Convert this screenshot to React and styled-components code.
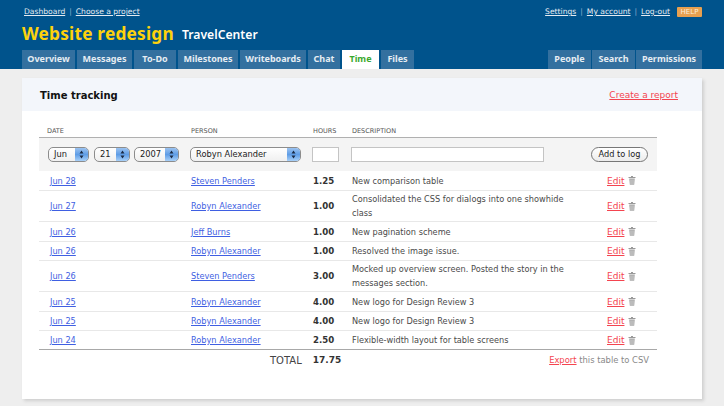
import React from 'react';
import styled, { createGlobalStyle } from 'styled-components';

const GlobalStyle = createGlobalStyle`
  html, body {
    margin: 0;
    padding: 0;
    background: #eeeeee;
    font-family: "DejaVu Sans", Verdana, sans-serif;
    overflow: hidden;
  }
`;

const Page = styled.div`
  width: 724px;
  height: 406px;
  overflow: hidden;
`;

const Header = styled.header`
  height: 69px;
  background: #00538c;
  padding: 0 22px;
  box-sizing: border-box;
  display: flex;
  flex-direction: column;
`;

const TopBar = styled.div`
  height: 23px;
  display: flex;
  justify-content: space-between;
  align-items: center;
  padding: 0 0 0 2px;
  font-size: 7.6px;
  color: #8fb0cc;
`;

const TopLinks = styled.div`
  display: flex;
  align-items: center;
  gap: 4px;
`;

const TopLink = styled.a`
  color: #e4ebf2;
  text-decoration: underline;
`;

const HelpBadge = styled.span`
  width: 25px;
  height: 10px;
  margin-left: 3px;
  background: #e8a050;
  color: #fbeedd;
  border-radius: 1px;
  font-size: 7px;
  line-height: 11px;
  text-align: center;
`;

const TitleRow = styled.div`
  height: 27px;
  box-sizing: border-box;
  padding-bottom: 6px;
  display: flex;
  align-items: center;
  gap: 8px;
`;

const ProjectName = styled.h1`
  margin: 0;
  color: #fdd20c;
  font-family: "Noto Sans", sans-serif;
  font-size: 17.3px;
  font-weight: bold;
  letter-spacing: 0.2px;
`;

const ClientName = styled.span`
  color: #ffffff;
  font-family: "Noto Sans", sans-serif;
  font-size: 12.2px;
  font-weight: 600;
  margin-top: 2px;
`;

const TabRow = styled.nav`
  height: 19px;
  display: flex;
  justify-content: space-between;
`;

const TabGroup = styled.div`
  display: flex;
  gap: ${p => p.$gap || 2}px;
`;

const Tab = styled.a`
  width: ${p => p.$w}px;
  background: ${p => (p.$active ? '#ffffff' : '#33709f')};
  color: ${p => (p.$active ? '#3aa82c' : '#e6edf3')};
  font-family: "Noto Sans", sans-serif;
  font-size: 9px;
  font-weight: 700;
  line-height: 18px;
  text-align: center;
`;

const Main = styled.main`
  padding: 9px 22px 0;
`;

const Panel = styled.section`
  width: 680px;
  height: 321px;
  background: #ffffff;
  box-shadow: 2px 2px 3px #cfcfcf;
`;

const PanelHead = styled.div`
  height: 33px;
  box-sizing: border-box;
  padding: 1px 24px 0 18px;
  background: #f3f6fb;
  display: flex;
  justify-content: space-between;
  align-items: center;
`;

const PanelTitle = styled.h2`
  margin: 0;
  font-size: 10px;
  font-weight: bold;
  color: #111111;
`;

const RedLink = styled.a`
  color: #f4444f;
  text-decoration: underline;
  font-size: ${p => p.$size || 9}px;
`;

const Sheet = styled.div`
  margin: 0 45px 0 17px;
  padding-top: 14px;
  color: #444444;
`;

const cols = '152px 122px 39px 1fr 50px';

const HeadRow = styled.div`
  display: grid;
  grid-template-columns: ${cols};
  height: 12px;
  border-bottom: 1px solid #b0b0b0;
  font-size: 6.5px;
  line-height: 12px;
  color: #555555;
`;

const HeadCell = styled.span`
  padding-left: ${p => p.$pad || 0}px;
`;

const FormRow = styled.div`
  height: 33px;
  background: #f4f4f4;
  display: flex;
  align-items: center;
  padding-left: 9px;
`;

const Select = styled.div`
  width: ${p => p.$w}px;
  height: 15px;
  margin-right: ${p => p.$mr}px;
  box-sizing: border-box;
  display: flex;
  justify-content: space-between;
  border: 1px solid #8c8c8c;
  border-radius: 5px;
  background: linear-gradient(#ffffff, #f0f0f0);
  overflow: hidden;
  font-size: 8.3px;
  line-height: 13px;
  color: #222222;
  padding-left: 5px;
`;

const SelectArrow = styled.span`
  width: 13px;
  background: linear-gradient(#9cc3f0, #5f9de6 50%, #a8d0f8);
  display: flex;
  align-items: center;
  justify-content: center;
`;

const TextInput = styled.div`
  width: ${p => p.$w}px;
  height: 15px;
  margin-right: ${p => p.$mr}px;
  box-sizing: border-box;
  border: 1px solid #c4c4c4;
  background: #ffffff;
`;

const AddButton = styled.button`
  width: 57px;
  height: 15px;
  padding: 0;
  border: 1px solid #777777;
  border-radius: 8px;
  background: linear-gradient(#ffffff, #ececec);
  font-family: inherit;
  font-size: 8.2px;
  line-height: 13px;
  color: #222222;
`;

const LogRow = styled.div`
  display: grid;
  grid-template-columns: ${cols};
  align-items: center;
  height: ${p => p.$h}px;
  box-sizing: border-box;
  border-bottom: 1px solid ${p => (p.$last ? '#a8a8a8' : '#e8e8e8')};
  font-size: 8.2px;
`;

const BlueLink = styled.a`
  color: #3f5fe2;
  text-decoration: underline;
  padding-left: ${p => p.$pad || 0}px;
`;

const Hours = styled.span`
  font-size: 8.6px;
  font-weight: bold;
  color: #333333;
`;

const Description = styled.span`
  line-height: 14px;
  padding-right: 30px;
  color: #4a4a4a;
`;

const Actions = styled.span`
  display: flex;
  align-items: center;
  gap: 4px;
`;

const TotalRow = styled.div`
  display: flex;
  align-items: center;
  height: 20px;
  margin-left: 231px;
`;

const TotalLabel = styled.span`
  font-size: 10px;
  color: #444444;
`;

const TotalValue = styled(Hours)`
  margin-left: 11px;
  font-size: 9px;
`;

const ExportNote = styled.span`
  margin-left: auto;
  padding-right: 8px;
  font-size: 8.4px;
  color: #888888;
`;

const Updown = () => (
  <svg width="5" height="9" viewBox="0 0 5 9">
    <path d="M2.5 0.5 L4.5 3.5 H0.5 Z M2.5 8.5 L0.5 5.5 H4.5 Z" fill="#1b2a44" />
  </svg>
);

const Trash = () => (
  <svg width="8" height="9" viewBox="0 0 8 9">
    <path d="M0.5 1.5 H7.5 M3 0.5 H5" stroke="#999999" fill="none" />
    <path d="M1.2 2.5 H6.8 L6.2 8.7 H1.8 Z" fill="#aaaaaa" />
    <path d="M3 3.5 V8 M5 3.5 V8" stroke="#e6e6e6" strokeWidth="0.6" />
  </svg>
);

const leftTabs = [
  ['Overview', 53], ['Messages', 55], ['To-Do', 42], ['Milestones', 60],
  ['Writeboards', 66], ['Chat', 32], ['Time', 37, true], ['Files', 33],
];
const rightTabs = [['People', 43], ['Search', 43], ['Permissions', 66]];

const entries = [
  ['Jun 28', 'Steven Penders', '1.25', 'New comparison table', 20],
  ['Jun 27', 'Robyn Alexander', '1.00', 'Consolidated the CSS for dialogs into one showhide class', 31],
  ['Jun 26', 'Jeff Burns', '1.00', 'New pagination scheme', 20],
  ['Jun 26', 'Robyn Alexander', '1.00', 'Resolved the image issue.', 19],
  ['Jun 26', 'Steven Penders', '3.00', 'Mocked up overview screen. Posted the story in the messages section.', 31],
  ['Jun 25', 'Robyn Alexander', '4.00', 'New logo for Design Review 3', 20],
  ['Jun 25', 'Robyn Alexander', '4.00', 'New logo for Design Review 3', 19],
  ['Jun 24', 'Robyn Alexander', '2.50', 'Flexible-width layout for table screens', 19],
];

const App = () => {
  return (
    <Page>
      <GlobalStyle />
      <Header>
        <TopBar>
          <TopLinks>
            <TopLink>Dashboard</TopLink>|<TopLink>Choose a project</TopLink>
          </TopLinks>
          <TopLinks>
            <TopLink>Settings</TopLink>|<TopLink>My account</TopLink>|<TopLink>Log-out</TopLink>
            <HelpBadge>HELP</HelpBadge>
          </TopLinks>
        </TopBar>
        <TitleRow>
          <ProjectName>Website redesign</ProjectName>
          <ClientName>TravelCenter</ClientName>
        </TitleRow>
        <TabRow>
          <TabGroup>
            {leftTabs.map(([name, w, active]) => (
              <Tab key={name} $w={w} $active={active}>{name}</Tab>
            ))}
          </TabGroup>
          <TabGroup $gap={1}>
            {rightTabs.map(([name, w]) => (
              <Tab key={name} $w={w}>{name}</Tab>
            ))}
          </TabGroup>
        </TabRow>
      </Header>
      <Main>
        <Panel>
          <PanelHead>
            <PanelTitle>Time tracking</PanelTitle>
            <RedLink>Create a report</RedLink>
          </PanelHead>
          <Sheet>
            <HeadRow>
              <HeadCell $pad={8}>DATE</HeadCell>
              <HeadCell>PERSON</HeadCell>
              <HeadCell>HOURS</HeadCell>
              <HeadCell>DESCRIPTION</HeadCell>
            </HeadRow>
            <FormRow>
              <Select $w={41} $mr={5}>Jun<SelectArrow><Updown /></SelectArrow></Select>
              <Select $w={36} $mr={4}>21<SelectArrow><Updown /></SelectArrow></Select>
              <Select $w={45} $mr={11}>2007<SelectArrow><Updown /></SelectArrow></Select>
              <Select $w={111} $mr={11}>Robyn Alexander<SelectArrow><Updown /></SelectArrow></Select>
              <TextInput $w={27} $mr={12} />
              <TextInput $w={193} $mr={47} />
              <AddButton>Add to log</AddButton>
            </FormRow>
            {entries.map(([date, person, hours, text, h], i) => (
              <LogRow key={i} $h={h} $last={i === entries.length - 1}>
                <BlueLink $pad={11}>{date}</BlueLink>
                <BlueLink>{person}</BlueLink>
                <Hours>{hours}</Hours>
                <Description>{text}</Description>
                <Actions>
                  <RedLink>Edit</RedLink>
                  <Trash />
                </Actions>
              </LogRow>
            ))}
            <TotalRow>
              <TotalLabel>TOTAL</TotalLabel>
              <TotalValue>17.75</TotalValue>
              <ExportNote><RedLink $size={8.4}>Export</RedLink> this table to CSV</ExportNote>
            </TotalRow>
          </Sheet>
        </Panel>
      </Main>
    </Page>
  );
};

export default App;
